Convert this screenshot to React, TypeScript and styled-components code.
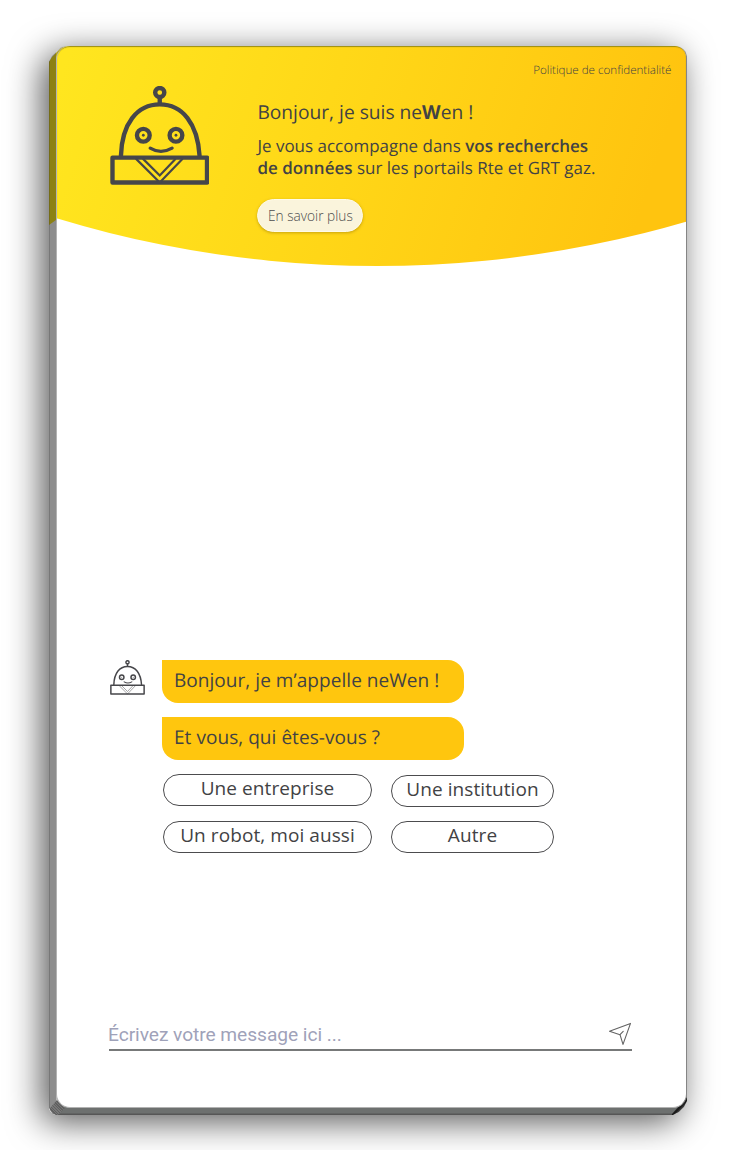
import React from "react";
import styled, { createGlobalStyle } from "styled-components";

const GlobalStyle = createGlobalStyle`
  * { box-sizing: border-box; }
  body {
    margin: 0;
    background: #fff;
    font-family: "Open Sans", "Noto Sans", sans-serif;
    color: #424244;
    text-rendering: geometricPrecision;
  }
`;

const Page = styled.main`
  width: 730px;
  height: 1150px;
  padding: 46px 43px 35px 49px;
  overflow: hidden;
`;

const Shell = styled.div`
  position: relative;
  height: 1069px;
  padding: 0 0 8px 7px;
  border-radius: 22px 14px 18px 8px;
  box-shadow: -7px 7px 34px 0 rgba(0, 0, 0, 0.66);
`;

const LeftEdge = styled.div`
  position: absolute;
  left: 0;
  top: 0;
  width: 24px;
  height: 1069px;
  background: linear-gradient(90deg, #777 0 1px, #8d8d8d 1px 7px, #bbb 7px);
  clip-path: polygon(0 16px, 3px 10px, 12px 1px, 18px 0, 24px 20px, 24px 1061px, 7px 1069px, 3px 1067px, 0 1062px);
`;

const LeftEdgeTint = styled.div`
  position: absolute;
  left: 0;
  top: 0;
  width: 24px;
  height: 180px;
  background: linear-gradient(90deg, #756c17 0 1px, #8c8114 1px 7px, #b6a516 7px);
  clip-path: polygon(0 16px, 3px 11px, 12px 2px, 18px 0, 24px 0, 24px 162px, 7px 174px, 0 179px);
`;

const BottomEdge = styled.div`
  position: absolute;
  left: 0;
  bottom: 0;
  width: 638px;
  height: 30px;
  background: linear-gradient(180deg, #6d706f 0 28px, #565656 29px);
  clip-path: polygon(16px 20px, 615px 20px, 638px 8px, 638px 14px, 632px 23px, 622px 30px, 6px 30px);
`;

const BottomLeftCorner = styled.div`
  position: absolute;
  left: 1px;
  bottom: 0;
  width: 15px;
  height: 15px;
  background: repeating-linear-gradient(45deg, #606060 0 1px, #777 1px 2px);
  clip-path: polygon(0 8px, 7px 0, 15px 8px, 8px 15px, 3px 14px, 0 10px);
`;

const BottomRightCorner = styled.div`
  position: absolute;
  right: 0;
  bottom: 0;
  width: 16px;
  height: 20px;
  background: linear-gradient(135deg, #444 45%, #151515 60%, #666 72%);
  clip-path: polygon(0 20px, 16px 2px, 16px 6px, 13px 12px, 8px 17px, 2px 20px);
`;

const Face = styled.section`
  position: relative;
  display: flex;
  flex-direction: column;
  height: 1062px;
  background: #fff;
  border: 1px solid #b2b2b2;
  border-top: 0;
  border-right-color: #858585;
  border-radius: 14px 12px 14px 14px;
  overflow: hidden;
`;

const Header = styled.header`
  display: flex;
  flex: none;
  height: 220px;
  margin: 0 -1px;
  padding: 0 15.5px 0 53.5px;
  background: linear-gradient(108deg, #ffe61f 2%, #ffd617 47%, #ffc40f 91%);
  box-shadow: inset 0 2px 1px -1px #998b15, inset -2px 0 1px -1px #a58916, inset 2px 0 1px -1px #c5b51c;
  border-radius: 14px 12px 0 0;
  clip-path: circle(1101px at 321px -881px);
`;

const HeaderLogo = styled.div`
  width: 147.9px;
  padding-top: 40px;
`;

const Intro = styled.div`
  flex: 1;
  display: flex;
  flex-direction: column;
  align-items: flex-start;
  padding-top: 16px;
`;

const Policy = styled.a`
  align-self: flex-end;
  font-size: 11.6px;
  line-height: 18px;
  font-weight: 300;
  white-space: nowrap;
`;

const Title = styled.h1`
  margin: 19px 0 0;
  font-size: 19.2px;
  line-height: 26px;
  font-weight: 400;
  white-space: nowrap;
`;

const Lead = styled.p`
  margin: 10px 0 0;
  font-size: 16.95px;
  line-height: 22px;
  letter-spacing: 0.02px;
  white-space: nowrap;

  strong { font-weight: 600; }
`;

const MoreButton = styled.button`
  width: 106px;
  height: 33px;
  margin-top: 20px;
  padding: 0;
  border: 1px solid #fffbe8;
  border-radius: 17px;
  background: #faf4dc;
  box-shadow: 0 1px 3px rgba(120, 90, 0, 0.4);
  color: #4c4c4c;
  font: 300 13.7px "Open Sans", sans-serif;
  white-space: nowrap;
`;

const Conversation = styled.div`
  display: flex;
  gap: 16px;
  padding: 394px 0 0 52px;
`;

const Avatar = styled.div`
  width: 37px;
  height: 36px;
  padding-left: 0.5px;
`;

const Thread = styled.div`
  display: flex;
  flex-direction: column;
  align-items: flex-start;
`;

const Bubble = styled.p`
  width: 302px;
  height: 42.5px;
  margin: 0 0 14.5px;
  padding-left: 12px;
  border-radius: 0 16px 16px 16px;
  background: #ffc60e;
  font-size: 19px;
  line-height: 40px;
  letter-spacing: 0.05px;
  white-space: nowrap;
`;

const Choices = styled.div`
  display: grid;
  grid-template-columns: 209px 163px;
  gap: 15px 19px;
  margin-left: 1px;
`;

const Choice = styled.button<{ $shift?: number }>`
  height: 32px;
  margin: ${({ $shift = 0 }) => `${$shift}px 0 ${-$shift}px`};
  padding: 0 0 4px;
  border: 1.3px solid #4c4c4e;
  border-radius: 17px;
  background: #fff;
  color: #424244;
  font: 400 19px "Open Sans", sans-serif;
  letter-spacing: 0.08px;
  line-height: 26px;
  white-space: nowrap;
`;

const Composer = styled.form`
  display: flex;
  justify-content: space-between;
  width: 523px;
  height: 30px;
  margin: auto 0 56px 52px;
  border-bottom: 2px solid #777979;
`;

const MessageInput = styled.input`
  flex: 1;
  height: 26px;
  margin-left: -1px;
  padding: 0;
  border: 0;
  outline: 0;
  background: transparent;
  font: 400 19.2px Roboto, sans-serif;
  letter-spacing: -0.06px;

  &::placeholder { color: #9fa2b9; opacity: 1; }
`;

const SendButton = styled.button`
  width: 24px;
  height: 26px;
  padding: 0;
  border: 0;
  background: none;

  svg { display: block; }
`;

type RobotProps = { size: number; stroke: number; fine: number };

const Robot = ({ size, stroke, fine }: RobotProps) => (
  <svg width={size} height={size} viewBox="0 0 100 100" fill="none" stroke="#46464a" strokeWidth={stroke} strokeLinecap="round" strokeLinejoin="round">
    <circle cx="50" cy="6.6" r="4.6" />
    <path d="M50 11v7" />
    <path d="M11 70C12 38 27 18.5 50 18.5S88 38 90 70" />
    <circle cx="33.5" cy="49.5" r="6.4" />
    <circle cx="66.3" cy="49.5" r="6.4" />
    <circle cx="33.5" cy="49.5" r="1.4" fill="#46464a" stroke="none" />
    <circle cx="66.3" cy="49.5" r="1.4" fill="#46464a" stroke="none" />
    <path d="M40.4 62.5Q51 69 62.4 62.5" strokeWidth={stroke * 0.75} />
    <path d="M2.5 72h95v25h-95z" />
    <g strokeWidth={fine} strokeLinecap="butt" strokeLinejoin="miter">
      <path d="M26 73l24 24 23-24" />
      <path d="M33 73l17 17 16-17" />
    </g>
  </svg>
);

const SendIcon = () => (
  <svg width="24" height="24" viewBox="0 0 24 24" fill="none" stroke="#636363" strokeWidth="1.1" strokeLinejoin="round" strokeLinecap="round">
    <path d="M1.5 9.2L22.5 1.4 15 22.4 12 12.7Z" />
    <path d="M12 12.7l3.2-3.3" />
  </svg>
);

export default function App() {
  return (
    <Page>
      <GlobalStyle />
      <Shell>
        <LeftEdge />
        <LeftEdgeTint />
        <BottomEdge />
        <BottomLeftCorner />
        <BottomRightCorner />
        <Face>
          <Header>
            <HeaderLogo>
              <Robot size={99.5} stroke={4.4} fine={2.2} />
            </HeaderLogo>
            <Intro>
              <Policy>Politique de confidentialité</Policy>
              <Title>Bonjour, je suis ne<strong>W</strong>en !</Title>
              <Lead>
                Je vous accompagne dans <strong>vos recherches<br />de données</strong> sur les portails Rte et GRT gaz.
              </Lead>
              <MoreButton>En savoir plus</MoreButton>
            </Intro>
          </Header>
          <Conversation>
            <Avatar>
              <Robot size={35} stroke={4.2} fine={1.4} />
            </Avatar>
            <Thread>
              <Bubble>Bonjour, je m’appelle neWen !</Bubble>
              <Bubble>Et vous, qui êtes-vous ?</Bubble>
              <Choices>
                <Choice>Une entreprise</Choice>
                <Choice $shift={1}>Une institution</Choice>
                <Choice>Un robot, moi aussi</Choice>
                <Choice>Autre</Choice>
              </Choices>
            </Thread>
          </Conversation>
          <Composer>
            <MessageInput placeholder="Écrivez votre message ici ..." />
            <SendButton type="button" aria-label="Envoyer">
              <SendIcon />
            </SendButton>
          </Composer>
        </Face>
      </Shell>
    </Page>
  );
}
